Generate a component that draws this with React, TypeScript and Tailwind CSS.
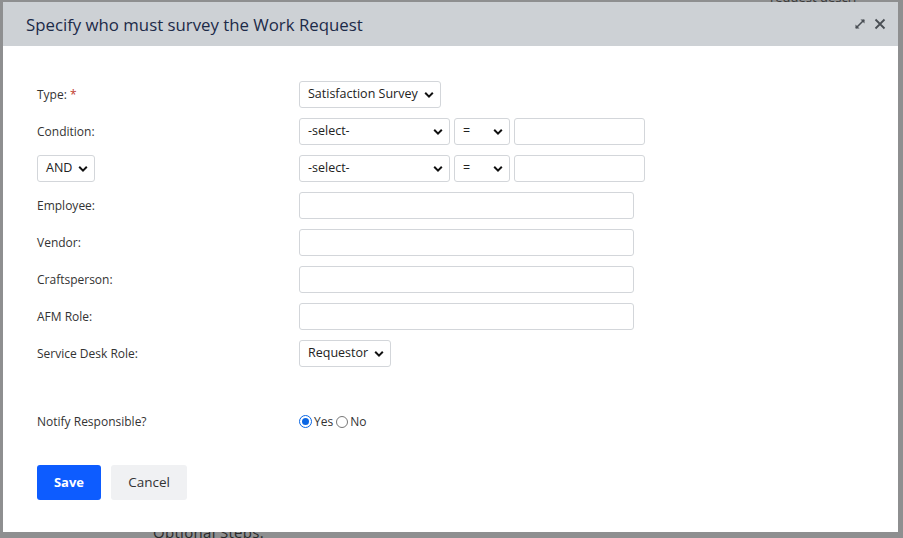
import React from "react";

const font = { fontFamily: '"Open Sans", "Noto Sans", sans-serif' };

function Chevron() {
  return (
    <svg width="10" height="7" viewBox="0 0 10 7" className="absolute right-[6px] top-1/2 -translate-y-1/2 pointer-events-none">
      <path d="M1.2 1.3 L5 5.1 L8.8 1.3" fill="none" stroke="#111" strokeWidth="2" />
    </svg>
  );
}

function Select({ w, text, pl = "pl-[8px]" }: { w: string; text: string; pl?: string }) {
  return (
    <div className={`relative ${w} h-[27px] border border-[#d3d6da] rounded-[3px] bg-white flex items-center ${pl} text-[12.5px] text-[#222]`}>
      <span>{text}</span>
      <Chevron />
    </div>
  );
}

function Input({ w }: { w: string }) {
  return <div className={`${w} h-[27px] border border-[#d3d6da] rounded-[3px] bg-white`} />;
}

function Row({ label, children, labelNode }: { label?: string; children: React.ReactNode; labelNode?: React.ReactNode }) {
  return (
    <div className="flex items-center h-[27px]">
      <div className="w-[262px] text-[12px] text-[#333]">{labelNode ?? label}</div>
      <div className="flex items-center gap-[4px]">{children}</div>
    </div>
  );
}

export default function App() {
  return (
    <div className="relative w-[903px] h-[538px] bg-[#8e8f90] overflow-hidden" style={font}>
      <div className="absolute left-[153px] top-[521px] text-[15px] text-[#2a2a2a] tracking-[0.3px]">Optional Steps:</div>
      <div className="absolute left-[770px] top-[-12px] text-[13px] text-[#3a3a3a]">request descri</div>
      <div className="relative ml-[3px] pt-[2px]">
        <div className="w-[895px] h-[530px] bg-white flex flex-col">
          <div className="h-[44px] bg-[#cdd1d5] flex items-center pl-[23px] pr-[12px] pt-[2px]">
            <div className="flex-1 text-[16.8px] text-[#1c2a48] font-medium">Specify who must survey the Work Request</div>
            <div className="flex items-center gap-[8px] mt-[-3px]">
              <svg width="12" height="12" viewBox="0 0 12 12">
                <path d="M2 10 L10 2" stroke="#4a4f55" strokeWidth="1.6" />
                <path d="M6.5 1.5 H10.5 V5.5 Z" fill="#4a4f55" />
                <path d="M1.5 6.5 V10.5 H5.5 Z" fill="#4a4f55" />
              </svg>
              <svg width="12" height="12" viewBox="0 0 12 12">
                <path d="M1.5 1.5 L10.5 10.5 M10.5 1.5 L1.5 10.5" stroke="#4a4f55" strokeWidth="1.8" />
              </svg>
            </div>
          </div>
          <div className="pl-[34px] pt-[35px] flex flex-col gap-[10px]">
            <Row labelNode={<span>Type: <span className="text-[#c0392b]">*</span></span>}>
              <Select w="w-[142px]" text="Satisfaction Survey" />
            </Row>
            <Row label="Condition:">
              <Select w="w-[151px]" text="-select-" />
              <Select w="w-[56px]" text="=" />
              <Input w="w-[131px]" />
            </Row>
            <Row
              labelNode={
                <div className="relative w-[58px] h-[27px] border border-[#d3d6da] rounded-[3px] bg-white flex items-center pl-[8px] text-[12.5px] text-[#222]">
                  <span>AND</span>
                  <Chevron />
                </div>
              }
            >
              <Select w="w-[151px]" text="-select-" />
              <Select w="w-[56px]" text="=" />
              <Input w="w-[131px]" />
            </Row>
            <Row label="Employee:"><Input w="w-[335px]" /></Row>
            <Row label="Vendor:"><Input w="w-[335px]" /></Row>
            <Row label="Craftsperson:"><Input w="w-[335px]" /></Row>
            <Row label="AFM Role:"><Input w="w-[335px]" /></Row>
            <Row label="Service Desk Role:"><Select w="w-[92px]" text="Requestor" /></Row>
            <div className="flex items-center h-[27px] mt-[31px]">
              <div className="w-[262px] text-[12px] text-[#333]">Notify Responsible?</div>
              <div className="flex items-center text-[12px] text-[#333]">
                <span className="w-[13px] h-[13px] rounded-full border border-[#0a66e4] flex items-center justify-center mr-[2px]">
                  <span className="w-[7px] h-[7px] rounded-full bg-[#0a66e4]" />
                </span>
                <span className="mr-[3px]">Yes</span>
                <span className="w-[12px] h-[12px] rounded-full border border-[#777] mr-[2px]" />
                <span>No</span>
              </div>
            </div>
            <div className="flex gap-[10px] mt-[20px]">
              <div className="w-[64px] h-[35px] bg-[#0d5cff] rounded-[3px] text-white text-[13px] font-bold flex items-center justify-center">Save</div>
              <div className="w-[76px] h-[35px] bg-[#f0f1f3] rounded-[3px] text-[#333] text-[13.5px] flex items-center justify-center">Cancel</div>
            </div>
          </div>
        </div>
      </div>
    </div>
  );
}
